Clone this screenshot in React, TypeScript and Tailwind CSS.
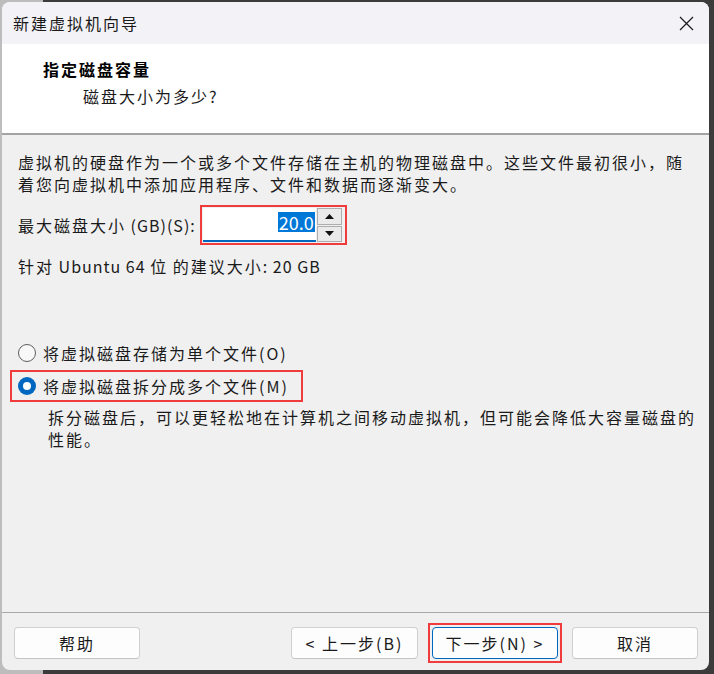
import React from 'react'

function CloseIcon() {
  return (
    <svg width="15" height="15" viewBox="0 0 15 15" className="block">
      <path d="M1 1 L14 14 M14 1 L1 14" stroke="#1a1a1a" strokeWidth="1.2" fill="none" />
    </svg>
  )
}

function Radio({ checked }: { checked: boolean }) {
  if (checked) {
    return (
      <span className="w-[18px] h-[18px] rounded-full bg-[#0067c0] flex items-center justify-center shrink-0">
        <span className="w-[8px] h-[8px] rounded-full bg-white" />
      </span>
    )
  }
  return <span className="w-[18px] h-[18px] rounded-full border border-[#5f5f5f] bg-[#f8f8f8] shrink-0" />
}

function WizButton({ label, primary = false, className = '' }: { label: string; primary?: boolean; className?: string }) {
  return (
    <button
      className={`h-[32px] rounded-[4px] bg-[#fdfdfd] border text-[16px] leading-[20px] text-[#1a1a1a] flex items-center justify-center ${
        primary ? 'border-[#0067c0]' : 'border-[#d0d0d0] border-b-[#c4c4c4]'
      } ${className}`}
    >
      {label}
    </button>
  )
}

// latin runs are set a little tighter than the CJK text around them
function Lat({ children }: { children: React.ReactNode }) {
  return <span className="tracking-[1px]">{children}</span>
}

export default function App() {
  return (
    <div className="w-[714px] h-[674px] bg-[linear-gradient(90deg,#bdbdbd_43px,#3b3b3b_43px)] pt-[2px] pl-[2px] font-['Noto_Sans_CJK_SC',sans-serif] text-[16px] tracking-[2px] text-[#1a1a1a]">
      <div className="w-[707px] h-[668px] rounded-[8px] overflow-hidden bg-[#f0f0f0] flex flex-col">
        {/* Title bar */}
        <div className="h-[42px] shrink-0 bg-[#f3f2f7] flex items-center justify-between pl-[11px] pr-[15px]">
          <span className="leading-[22px]">新建虚拟机向导</span>
          <CloseIcon />
        </div>

        {/* Header */}
        <div className="h-[91px] shrink-0 bg-white border-b-2 border-[#a3a3a3] pl-[41px] pt-[14px]">
          <div className="font-bold leading-[22px] text-black">指定磁盘容量</div>
          <div className="leading-[22px] mt-[5px] ml-[40px]">磁盘大小为多少?</div>
        </div>

        {/* Body */}
        <div className="flex-1 pt-[16px] pr-[8px]">
          <p className="pl-[16px] leading-[22px]">
            虚拟机的硬盘作为一个或多个文件存储在主机的物理磁盘中。这些文件最初很小，随着您向虚拟机中添加应用程序、文件和数据而逐渐变大。
          </p>

          <div className="pl-[16px] mt-[10px] flex items-center">
            <span className="leading-[22px]">最大磁盘大小<Lat> (GB)(S):</Lat></span>
            <div className="ml-[4px] w-[147px] h-[40px] border-2 border-[#f03c3c] flex p-[1px] pr-[3px] gap-[1px]">
              <div className="flex-1 bg-white border-b-2 border-[#0067c0] flex items-center justify-end pr-[1px] pb-[4px]">
                <span className="bg-[#0078d7] text-white text-[18px] leading-[20px] tracking-normal px-[1px]">20.0</span>
              </div>
              <div className="w-[25px] flex flex-col gap-[1px]">
                <div className="flex-1 bg-[#eaeaea] border border-[#adadad] flex items-center justify-center">
                  <svg width="9" height="5" viewBox="0 0 9 5"><path d="M0 5 L4.5 0 L9 5 Z" fill="#111" /></svg>
                </div>
                <div className="flex-1 bg-[#eaeaea] border border-[#adadad] flex items-center justify-center">
                  <svg width="9" height="5" viewBox="0 0 9 5"><path d="M0 0 L4.5 5 L9 0 Z" fill="#111" /></svg>
                </div>
              </div>
            </div>
          </div>

          <div className="pl-[16px] mt-[10px] leading-[22px]">
            针对<Lat> Ubuntu 64 </Lat>位<Lat> </Lat>的建议大小<Lat>: 20 GB</Lat>
          </div>

          {/* Disk file options */}
          <div className="ml-[8px] mt-[60px] w-[293px] h-[32px] border-2 border-transparent flex items-center pl-[6px]">
            <Radio checked={false} />
            <span className="ml-[7px] leading-[22px]">将虚拟磁盘存储为单个文件(O)</span>
          </div>
          <div className="ml-[8px] mt-[1px] w-[293px] h-[32px] border-2 border-[#f03c3c] flex items-center pl-[6px]">
            <Radio checked />
            <span className="ml-[7px] leading-[22px]">将虚拟磁盘拆分成多个文件(M)</span>
          </div>
          <p className="pl-[46px] mt-[4px] leading-[22px]">
            拆分磁盘后，可以更轻松地在计算机之间移动虚拟机，但可能会降低大容量磁盘的性能。
          </p>
        </div>

        {/* Footer buttons */}
        <div className="h-[58px] shrink-0 border-t border-[#a8a8a8] pt-[10px]">
          <div className="h-[40px] flex items-center pl-[12px] pr-[11px]">
            <WizButton label="帮助" className="w-[126px]" />
            <div className="flex-1" />
            <WizButton label="< 上一步(B)" className="w-[127px]" />
            <div className="ml-[10px] border-2 border-[#f03c3c] p-[2px]">
              <WizButton label="下一步(N) >" primary className="w-[126px]" />
            </div>
            <WizButton label="取消" className="ml-[10px] w-[126px]" />
          </div>
        </div>
      </div>
    </div>
  )
}
